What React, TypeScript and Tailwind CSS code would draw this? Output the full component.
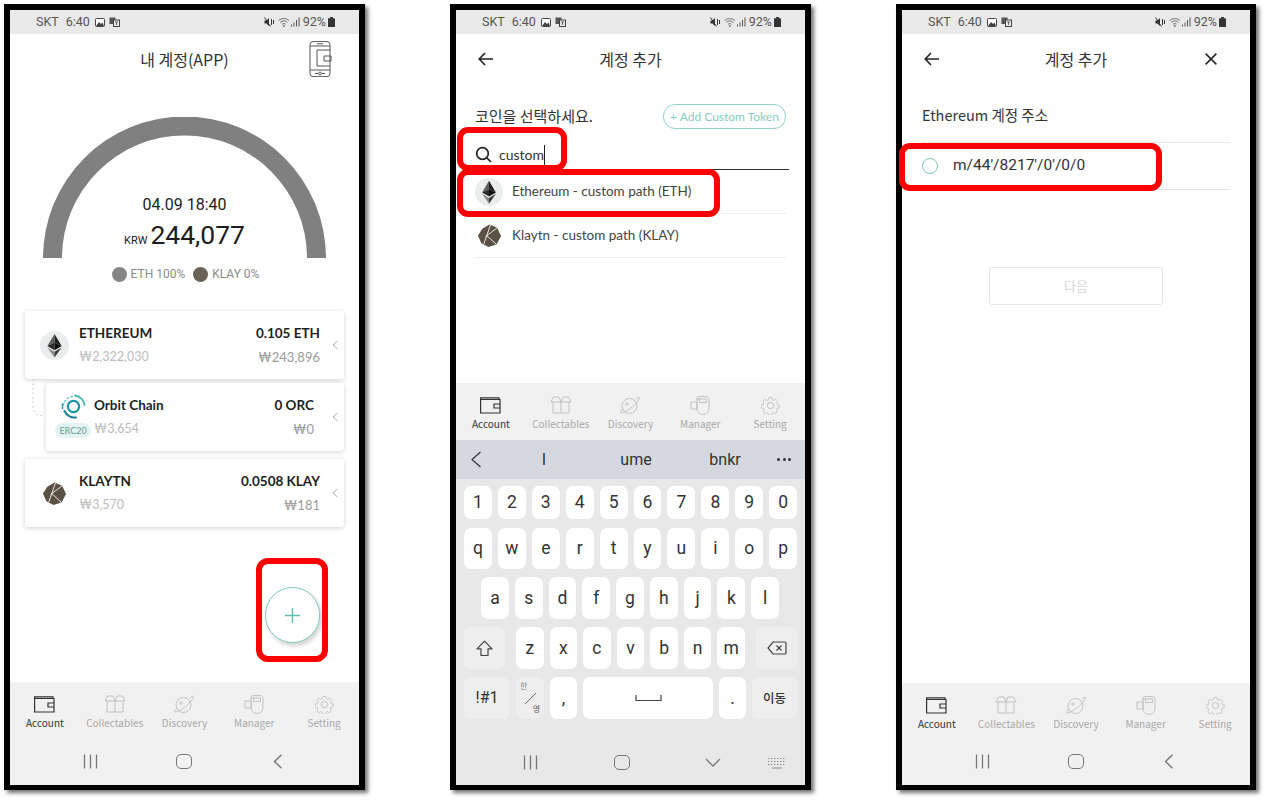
import React from 'react';

const KR = "font-['Noto_Sans_CJK_KR','Noto_Sans',sans-serif]";
const LATO = "font-['Lato','Noto_Sans_CJK_KR',sans-serif]";
const ROBOTO = "font-['Roboto','Noto_Sans_CJK_KR',sans-serif]";

const EthIcon = ({ size }: { size: number }) => (
  <svg width={size} height={size} viewBox="0 0 30 30">
    <circle cx="15" cy="15" r="15" fill="#e9eded" />
    <polygon points="15,3 15,12 7.6,15.5" fill="#5c5c5c" />
    <polygon points="15,3 15,12 22.4,15.5" fill="#222" />
    <polygon points="7.6,15.5 15,12 15,19.8" fill="#2c2c2c" />
    <polygon points="22.4,15.5 15,12 15,19.8" fill="#0c0c0c" />
    <polygon points="7.6,17 15,21.5 15,27.5" fill="#8a8a8a" />
    <polygon points="22.4,17 15,21.5 15,27.5" fill="#3a3a3a" />
  </svg>
);

const KlayIcon = ({ size }: { size: number }) => (
  <svg width={size} height={size} viewBox="0 0 24 24">
    <polygon points="12,0.5 20,4 24,12.5 19.5,21 11,24 3.5,20 0,12 4.5,5" fill="#5a5046" />
    <path d="M13 1 L6 21 M8 13 L20 4 M9 12 L19 21" stroke="#efebe6" strokeWidth="1" fill="none" />
  </svg>
);

const OrbitIcon = () => (
  <svg width="25" height="25" viewBox="0 0 25 25" fill="none" strokeLinecap="round">
    <circle cx="12.5" cy="12.5" r="5.6" stroke="#1794a8" strokeWidth="2.2" />
    <path d="M14 1.5 A11 11 0 0 1 23.5 11" stroke="#45bba8" strokeWidth="1.8" />
    <path d="M11.5 2.5 A10 10 0 0 0 2.5 11" stroke="#1aa3c0" strokeWidth="1" strokeDasharray="2 2" />
    <path d="M3.5 17 A11 11 0 0 0 15 23.5" stroke="#1a7f96" strokeWidth="2" />
    <path d="M1.5 10 L1.5 15" stroke="#1794a8" strokeWidth="1.6" strokeDasharray="1.5 1.5" />
  </svg>
);

const StatusBar = () => (
  <div className={`flex h-6 shrink-0 items-center justify-between bg-[#e9e9e9] pl-[26px] pr-[24px] text-[12.5px] text-[#555] ${ROBOTO}`}>
    <div className="flex items-center">
      <span>SKT</span>
      <span className="ml-[7px]">6:40</span>
      <svg className="ml-[5px]" width="10" height="9" viewBox="0 0 10 9">
        <rect x="0.5" y="0.5" width="9" height="8" rx="1" fill="#fff" stroke="#444" />
        <path d="M1 8 L4 4 L6 6 L7.5 4.5 L9 8 Z" fill="#444" />
      </svg>
      <svg className="ml-[4px]" width="11" height="10" viewBox="0 0 11 10">
        <rect x="0.5" y="0.5" width="6" height="6.5" fill="#555" />
        <rect x="4.5" y="3" width="6" height="6.5" fill="#e9e9e9" stroke="#444" />
        <path d="M6 5 H9 M7.5 5 V8" stroke="#444" strokeWidth="0.8" />
      </svg>
    </div>
    <div className="flex items-center">
      <svg width="11" height="10" viewBox="0 0 11 10" fill="#333">
        <path d="M0.5 3.5 H2.5 L5 1 V9 L2.5 6.5 H0.5 Z" />
        <path d="M0.5 0.5 L6.5 9.5" stroke="#333" strokeWidth="1" />
        <path d="M7.5 2 V8 M9.5 3 V7" stroke="#333" strokeWidth="1" />
      </svg>
      <svg className="ml-[3px]" width="12" height="10" viewBox="0 0 12 10" fill="none" stroke="#666" strokeWidth="0.9">
        <path d="M0.5 3.5 A8 8 0 0 1 11 3.5" />
        <path d="M2.2 5.4 A5.5 5.5 0 0 1 9.4 5.4" />
        <path d="M4 7.2 A3 3 0 0 1 7.6 7.2" />
        <circle cx="5.8" cy="9" r="0.6" fill="#666" />
      </svg>
      <svg className="ml-[1px]" width="9" height="10" viewBox="0 0 9 10" stroke="#555" strokeWidth="1">
        <path d="M0.5 9.5 V7.5 M3 9.5 V5.5 M5.5 9.5 V3 M8 9.5 V0.5" />
      </svg>
      <span className="ml-[3px]">92%</span>
      <svg className="ml-[2px]" width="7" height="10" viewBox="0 0 7 10" fill="#333">
        <rect x="2" y="0" width="3" height="1.5" />
        <rect x="0" y="1.2" width="7" height="8.8" rx="0.6" />
      </svg>
    </div>
  </div>
);

const Header = ({ title, left, right }: { title: string; left?: React.ReactNode; right?: React.ReactNode }) => (
  <div className="grid h-[50px] shrink-0 grid-cols-[78px_1fr_78px] items-center">
    <div className="pl-[22px]">{left}</div>
    <div className={`text-center text-[16px] text-[#333] ${KR}`}>{title}</div>
    <div className="flex justify-center">{right}</div>
  </div>
);

const BackArrow = () => (
  <svg width="16" height="14" viewBox="0 0 16 14" fill="none" stroke="#222" strokeWidth="1.6">
    <path d="M15 7 H1.5 M7 1 L1.2 7 L7 13" />
  </svg>
);

const TabIcon = ({ name, color }: { name: string; color: string }) => {
  if (name === 'Account')
    return (
      <svg width="21" height="17" viewBox="0 0 21 17" fill="none" stroke={color} strokeWidth="1.2">
        <path d="M0.6 2.5 H20 V16 H0.6 Z M0.6 2.5 V0.8 H19 V2.5" />
        <path d="M20 7 H14 V11 H20" />
      </svg>
    );
  if (name === 'Collectables')
    return (
      <svg width="22" height="18" viewBox="0 0 22 18" fill="none" stroke={color} strokeWidth="0.9">
        <path d="M3 6 V17 H19 V6" />
        <path d="M11 6 V17 M3 6 H19" />
        <path d="M3 6 L1 5.5 L3.5 1 H9 L11 6 L13 1 H18.5 L21 5.5 L19 6" />
      </svg>
    );
  if (name === 'Discovery')
    return (
      <svg width="20" height="19" viewBox="0 0 20 19" fill="none" stroke={color} strokeWidth="0.9">
        <circle cx="9.5" cy="10" r="7.5" />
        <path d="M16 3 C18 1 19.5 1 19.5 2 C19.5 4 14 10 8 14 C4 16.5 1 17.5 0.6 16.5 C0.3 15.8 1.5 14.5 3 13" />
        <circle cx="7" cy="8" r="1.2" />
      </svg>
    );
  if (name === 'Manager')
    return (
      <svg width="20" height="19" viewBox="0 0 20 19" fill="none" stroke={color} strokeWidth="0.9">
        <path d="M1 6 H7 V13 H1 Z M7 3 H10" />
        <path d="M7 2.5 C7 1 8 0.6 9 0.6 H16 C18 0.6 19 1.5 19 3 V12 C19 16 16.5 18.4 13 18.4 C9.5 18.4 7 16 7 12 Z" />
        <path d="M9.5 3 H16.5 V6.5 H9.5 Z" />
      </svg>
    );
  return (
    <svg width="19" height="19" viewBox="0 0 24 24" fill="none" stroke={color} strokeWidth="1.1" strokeLinejoin="round">
      <path d="M10 1.5 h4 l.6 3 2.2 1 2.6-1.6 2.8 2.8-1.6 2.6 1 2.2 3 .6 v0 h-.6 v4 l-3 .6-1 2.2 1.6 2.6-2.8 2.8-2.6-1.6-2.2 1-.6 3 h-4 l-.6-3-2.2-1-2.6 1.6-2.8-2.8 1.6-2.6-1-2.2-3-.6 v-4 l3-.6 1-2.2-1.6-2.6 2.8-2.8 2.6 1.6 2.2-1 z" transform="translate(1.2 0.6) scale(0.9)" />
      <circle cx="12" cy="12" r="4" />
    </svg>
  );
};

const TabBar = ({ h }: { h: string }) => (
  <div className={`flex shrink-0 bg-[#f1f1f1] pt-[12px] ${h}`}>
    {['Account', 'Collectables', 'Discovery', 'Manager', 'Setting'].map((t, i) => (
      <div key={t} className="flex flex-1 flex-col items-center">
        <div className="flex h-5 items-center">
          <TabIcon name={t} color={i === 0 ? '#333' : '#bcbcbc'} />
        </div>
        <span className={`mt-[2px] text-[10px] leading-[14px] ${KR} ${i === 0 ? 'text-[#333]' : 'text-[#a9a9a9]'}`}>{t}</span>
      </div>
    ))}
  </div>
);

const Bars = () => (
  <svg width="15" height="15" viewBox="0 0 15 15" stroke="#777" strokeWidth="1.3">
    <path d="M1.5 0.5 V14.5 M7.5 0.5 V14.5 M13.5 0.5 V14.5" />
  </svg>
);

const Home = () => <div className="h-[15px] w-4 rounded-[5px] border-[1.5px] border-[#777]" />;

const BackChevron = () => (
  <svg width="10" height="15" viewBox="0 0 10 15" fill="none" stroke="#777" strokeWidth="1.4">
    <path d="M8.5 0.8 L1.5 7.5 L8.5 14.2" />
  </svg>
);

const NavBar = () => (
  <div className="grid h-[47px] shrink-0 grid-cols-3 items-center bg-[#f1f1f1] px-[28px]">
    <div className="flex justify-center pl-[8px]"><Bars /></div>
    <div className="flex justify-center"><Home /></div>
    <div className="flex justify-center pr-[8px]"><BackChevron /></div>
  </div>
);

const Phone = ({ w, h, children }: { w: string; h: string; children: React.ReactNode }) => (
  <div className={`relative flex shrink-0 flex-col border-[6px] border-b-[5px] border-black bg-white shadow-[3px_3px_4px_rgba(0,0,0,0.55)] ${w} ${h}`}>
    {children}
  </div>
);

const Chevron = () => (
  <svg width="6" height="10" viewBox="0 0 6 10" fill="none" stroke="#a8a8a8" strokeWidth="1">
    <path d="M5.5 1 L1 5 L5.5 9" />
  </svg>
);

const CoinCard = ({
  className,
  left,
  name,
  price,
  amount,
  value,
  pr,
}: {
  className: string;
  left: React.ReactNode;
  name: string;
  price: string;
  amount: string;
  value: string;
  pr: string;
}) => (
  <div className={`flex h-[68px] items-center rounded-[3px] bg-white shadow-[0_1px_5px_rgba(0,0,0,0.18)] ${className} ${LATO}`}>
    {left}
    <div className="flex-1">
      <div className="flex justify-between text-[13.5px] font-bold leading-5 text-[#1f1f1f]">
        <span>{name}</span>
        <span>{amount}</span>
      </div>
      <div className="mt-1 flex justify-between text-[13px] leading-5">
        <span className="text-[12.5px] text-[#bcbcbc]">{price}</span>
        <span className="text-[#9a9a9a]">{value}</span>
      </div>
    </div>
    <div className={`flex justify-end pr-[6px] ${pr}`}>
      <Chevron />
    </div>
  </div>
);

const AccountScreen = () => (
  <Phone w="w-[361px]" h="h-[786px]">
    <StatusBar />
    <Header
      title="내 계정(APP)"
      right={
        <svg width="23" height="36" viewBox="0 0 23 36" fill="none" stroke="#555" strokeWidth="1">
          <rect x="1" y="0.6" width="20" height="35" rx="3" />
          <path d="M1 5 H21 M1 29 H21 M8 2.8 H14 M6 32.5 H9 M13 32.5 H16" />
          <circle cx="11" cy="32.5" r="1.4" />
          <path d="M8 9 H21 M8 9 V25 H21 M15 15 H22 V20 H15 Z" />
        </svg>
      }
    />
    <div className="flex flex-1 flex-col">
      <div className="mx-auto mt-[33px] grid w-[283px]">
        <svg className="col-start-1 row-start-1" width="283" height="141" viewBox="0 0 283 141">
          <path d="M0 141 A141.5 141.5 0 0 1 283 141 L264 141 A122.5 122.5 0 0 0 19 141 Z" fill="#808080" />
        </svg>
        <div className={`col-start-1 row-start-1 flex flex-col items-center justify-end pb-[1px] text-[#1c1c1c] ${ROBOTO}`}>
          <div className="text-[16px] leading-5">04.09 18:40</div>
          <div className="mt-[4px] flex items-baseline leading-[32px]">
            <span className="mr-[3px] text-[11px]">KRW</span>
            <span className="text-[26.5px]">244,077</span>
          </div>
        </div>
      </div>
      <div className={`mt-[6px] flex h-[20px] items-center justify-center pl-[2px] text-[12px] text-[#8b8b8b] ${ROBOTO}`}>
        <span className="mr-[4px] h-[15px] w-[15px] rounded-full bg-[#858585]" />
        <span>ETH 100%</span>
        <span className="ml-[8px] mr-[4px] h-[15px] w-[15px] rounded-full bg-[#6b6257]" />
        <span>KLAY 0%</span>
      </div>
      <div className="relative mt-[27px] flex flex-col">
        <CoinCard
          className="ml-[15px] mr-[15px]"
          left={<div className="ml-[15px] mr-[10px]"><EthIcon size={29} /></div>}
          name="ETHEREUM"
          price="₩2,322,030"
          amount="0.105 ETH"
          value="₩243,896"
          pr="w-[24px]"
        />
        <CoinCard
          className="ml-[36px] mr-[15px] mt-[4px]"
          left={
            <div className="ml-[9px] mr-[3px] flex w-[36px] flex-col items-center pb-[2px]">
              <OrbitIcon />
              <span className="mt-1 flex h-[15px] w-[36px] items-center justify-center rounded-full bg-[#e2f4f1] text-[9px] text-[#6f9a94]">ERC20</span>
            </div>
          }
          name="Orbit Chain"
          price="₩3,654"
          amount="0 ORC"
          value="₩0"
          pr="w-[30px]"
        />
        <CoinCard
          className="ml-[15px] mr-[15px] mt-[8px]"
          left={<div className="ml-[18px] mr-[13px]"><KlayIcon size={23} /></div>}
          name="KLAYTN"
          price="₩3,570"
          amount="0.0508 KLAY"
          value="₩181"
          pr="w-[24px]"
        />
        <svg className="absolute left-[22px] top-[68px]" width="14" height="40" viewBox="0 0 14 40" fill="none" stroke="#c4c4c4" strokeWidth="1" strokeDasharray="1.5 3">
          <path d="M1 0 V28 C1 34 5 37 13 37" />
        </svg>
      </div>
      <div className="mr-[39px] mt-[60px] flex h-[56px] w-[55px] items-center justify-center self-end rounded-full border border-[#82cdc1] bg-white shadow-[2px_3px_4px_rgba(0,0,0,0.18)]">
        <svg width="15" height="15" viewBox="0 0 15 15" stroke="#5fbdb0" strokeWidth="1.4">
          <path d="M7.5 0 V15 M0 7.5 H15" />
        </svg>
      </div>
    </div>
    <TabBar h="h-[56px]" />
    <NavBar />
    <div className="absolute left-[246px] top-[548px] h-[104px] w-[72px] rounded-[12px] border-[6px] border-[#ff0000]" />
  </Phone>
);

const Key = ({ children, className }: { children: React.ReactNode; className: string }) => (
  <div className={`flex items-center justify-center rounded-[7px] text-[#333] ${className}`}>{children}</div>
);

const Keyboard = () => (
  <div className={`flex flex-1 flex-col bg-[#e8e8e8] pt-[7px] text-[17.5px] ${ROBOTO}`}>
    <div className="flex h-[33px] gap-[6px] px-[8px]">
      {'1234567890'.split('').map((k) => (
        <Key key={k} className="flex-1 bg-white">{k}</Key>
      ))}
    </div>
    <div className="mt-[9px] flex h-[41px] gap-[6px] px-[8px]">
      {'qwertyuiop'.split('').map((k) => (
        <Key key={k} className="flex-1 bg-white">{k}</Key>
      ))}
    </div>
    <div className="mt-[8px] flex h-[42px] gap-[6px] pl-[25px] pr-[26px]">
      {'asdfghjkl'.split('').map((k) => (
        <Key key={k} className="flex-1 bg-white">{k}</Key>
      ))}
    </div>
    <div className="mt-[8px] flex h-[42px] px-[8px]">
      <Key className="mr-[11px] w-[41px] bg-[#eeeeee]">
        <svg width="17" height="17" viewBox="0 0 17 17" fill="none" stroke="#444" strokeWidth="1.2">
          <path d="M8.5 1.2 L16 8.8 H12 V15.5 H5 V8.8 H1 Z" strokeLinejoin="round" />
        </svg>
      </Key>
      <div className="flex flex-1 gap-[6px]">
        {'zxcvbnm'.split('').map((k) => (
          <Key key={k} className="flex-1 bg-white">{k}</Key>
        ))}
      </div>
      <Key className="ml-[11px] w-[41px] bg-[#eeeeee]">
        <svg width="20" height="14" viewBox="0 0 20 14" fill="none" stroke="#444" strokeWidth="1.2">
          <path d="M6 1 H18 C18.6 1 19 1.4 19 2 V12 C19 12.6 18.6 13 18 13 H6 L1 7 Z" />
          <path d="M9.5 4.5 L14.5 9.5 M14.5 4.5 L9.5 9.5" />
        </svg>
      </Key>
    </div>
    <div className="mt-[8px] flex h-[42px] gap-[6px] px-[8px]">
      <Key className="w-[46px] bg-[#eeeeee] text-[16px]">!#1</Key>
      <Key className={`relative w-[28px] bg-[#eeeeee] ${KR}`}>
        <span className="absolute left-[4px] top-[5px] text-[8px] leading-none text-[#888]">한</span>
        <svg width="13" height="13" viewBox="0 0 13 13" stroke="#555" strokeWidth="0.9">
          <path d="M1 12 L12 1" />
        </svg>
        <span className="absolute bottom-[6px] right-[4px] text-[8px] leading-none text-[#555]">영</span>
      </Key>
      <Key className="w-[27px] bg-white">,</Key>
      <Key className="flex-1 bg-white">
        <svg width="27" height="7" viewBox="0 0 27 7" fill="none" stroke="#444" strokeWidth="1.2">
          <path d="M1 0 V5.5 H26 V0" />
        </svg>
      </Key>
      <Key className="w-[27px] bg-white">.</Key>
      <Key className={`w-[45px] bg-[#eeeeee] text-[12.5px] font-medium text-[#2e8b57] ${KR}`}>이동</Key>
    </div>
    <div className="mt-auto grid h-[45px] grid-cols-[1fr_1fr_1fr_48px] items-center pl-[28px] pr-[4px]">
      <div className="flex justify-center pl-[3px]"><Bars /></div>
      <div className="flex justify-center pl-[7px]"><Home /></div>
      <div className="flex justify-center pl-[10px]">
        <svg width="16" height="9" viewBox="0 0 16 9" fill="none" stroke="#777" strokeWidth="1.3">
          <path d="M1 1 L8 8 L15 1" />
        </svg>
      </div>
      <div className="flex justify-center">
        <svg width="18" height="12" viewBox="0 0 18 12" stroke="#888" strokeWidth="1" strokeDasharray="1.4 1.6">
          <path d="M0 1.5 H18 M0 4.5 H18 M0 7.5 H18" />
          <path d="M4 11 H14" strokeDasharray="none" />
        </svg>
      </div>
    </div>
  </div>
);

const SearchScreen = () => (
  <Phone w="w-[361px]" h="h-[786px]">
    <StatusBar />
    <Header title="계정 추가" left={<BackArrow />} />
    <div className="flex flex-1 flex-col pl-[19px] pr-[19px]">
      <div className="mt-[20px] flex h-[25px] items-center justify-between">
        <span className={`text-[15px] text-[#333] ${KR}`}>코인을 선택하세요.</span>
        <span className={`flex h-[25px] w-[123px] items-center justify-center rounded-[12px] border border-[#8fd3c8] text-[12px] text-[#84cdc1] ${LATO}`}>+ Add Custom Token</span>
      </div>
      <div className={`-mr-[3px] flex h-[41px] items-end border-b border-[#333] pb-[4px] text-[14px] text-[#333] ${LATO}`}>
        <svg className="mb-[2px]" width="17" height="17" viewBox="0 0 17 17" fill="none" stroke="#222" strokeWidth="1.7">
          <circle cx="7.5" cy="7.5" r="5.8" />
          <path d="M11.8 11.8 L16 16" />
        </svg>
        <span className="ml-[7px] border-r border-[#222] leading-[20px]">custom</span>
      </div>
      <div className={`flex h-[44px] items-center border-b border-[#ececec] text-[13.5px] text-[#444] ${LATO}`}>
        <EthIcon size={28} />
        <span className="ml-[9px]">Ethereum - custom path (ETH)</span>
      </div>
      <div className={`flex h-[44px] items-center border-b border-[#ececec] text-[13.5px] text-[#444] ${LATO}`}>
        <div className="ml-[3px] mr-[11px]"><KlayIcon size={23} /></div>
        <span>Klaytn - custom path (KLAY)</span>
      </div>
    </div>
    <TabBar h="h-[57px]" />
    <div className={`flex h-[39px] shrink-0 items-center bg-[#d5d8df] text-[16px] text-[#333] ${ROBOTO}`}>
      <div className="flex w-[48px] justify-center pr-[8px]">
        <svg width="12" height="17" viewBox="0 0 12 17" fill="none" stroke="#333" strokeWidth="1.2">
          <path d="M10.5 1 L2 8.5 L10.5 16" />
        </svg>
      </div>
      <span className="w-[80px] text-center">l</span>
      <span className="ml-[8px] w-[88px] text-center">ume</span>
      <span className="w-[90px] text-center">bnkr</span>
      <div className="ml-[7px] flex gap-[2.5px]">
        <span className="h-[3px] w-[3px] rounded-full bg-[#333]" />
        <span className="h-[3px] w-[3px] rounded-full bg-[#333]" />
        <span className="h-[3px] w-[3px] rounded-full bg-[#333]" />
      </div>
    </div>
    <Keyboard />
    <div className="absolute left-[1px] top-[117px] h-[44px] w-[110px] rounded-[11px] border-[6px] border-[#ff0000]" />
    <div className="absolute left-[1px] top-[159px] h-[48px] w-[263px] rounded-[11px] border-[6px] border-[#ff0000]" />
  </Phone>
);

const PathScreen = () => (
  <Phone w="w-[360px]" h="h-[786px]">
    <StatusBar />
    <Header
      title="계정 추가"
      left={<BackArrow />}
      right={
        <svg width="12" height="12" viewBox="0 0 12 12" stroke="#222" strokeWidth="1.5">
          <path d="M0.6 0.6 L11.4 11.4 M11.4 0.6 L0.6 11.4" />
        </svg>
      }
    />
    <div className="flex flex-1 flex-col">
      <div className="mx-[20px] flex h-[59px] items-start border-b border-[#e4e4e4] pt-[20px]">
        <span className={`text-[14.5px] leading-[22px] text-[#333] ${KR}`}>Ethereum 계정 주소</span>
      </div>
      <div className="mx-[20px] flex h-[47px] items-center border-b border-[#e4e4e4]">
        <span className="h-4 w-4 rounded-full border border-[#7fcabd]" />
        <span className={`ml-[15px] text-[15.5px] text-[#333] ${ROBOTO}`}>m/44'/8217'/0'/0/0</span>
      </div>
      <div className={`mx-auto mt-[77px] flex h-[38px] w-[174px] items-center justify-center rounded-[3px] border border-[#e6e6e6] text-[13px] text-[#d9d9d9] ${KR}`}>다음</div>
    </div>
    <TabBar h="h-[55px]" />
    <NavBar />
    <div className="absolute left-[-3px] top-[133px] h-[48px] w-[263px] rounded-[11px] border-[6px] border-[#ff0000]" />
  </Phone>
);

export default function App() {
  return (
    <div className="flex h-[804px] w-[1269px] gap-[85px] overflow-hidden bg-white pl-[4px] pt-[4px]">
      <AccountScreen />
      <SearchScreen />
      <PathScreen />
    </div>
  );
}
